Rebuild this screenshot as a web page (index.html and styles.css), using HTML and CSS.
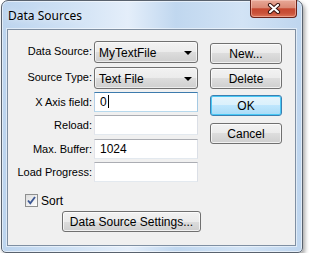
FILE: index.html
```html
<!DOCTYPE html>
<html>
<head>
    <title>Data Sources</title>
    <link rel="stylesheet" href="styles.css">
</head>
<body>
    <div class="window">
        <div class="titlebar">
            <span class="title">Data Sources</span>
            <div class="close">
                <svg width="14" height="11" viewBox="0 0 14 11">
                    <path d="M3 2 L11 9 M11 2 L3 9" stroke="#3a1410" stroke-width="4.2" stroke-linecap="round"/>
                    <path d="M3 2 L11 9 M11 2 L3 9" stroke="#ffffff" stroke-width="2.2" stroke-linecap="round"/>
                </svg>
            </div>
        </div>
        <div class="client">
            <div class="top">
                <div class="form">
                    <label class="lbl">Data Source:</label>
                    <div class="combo">MyTextFile<span class="arrow"></span></div>

                    <label class="lbl">Source Type:</label>
                    <div class="combo">Text File<span class="arrow"></span></div>

                    <label class="lbl">X Axis field:</label>
                    <div class="field focused">0<span class="caret"></span></div>

                    <label class="lbl">Reload:</label>
                    <div class="field"></div>

                    <label class="lbl">Max. Buffer:</label>
                    <div class="field">1024</div>

                    <label class="lbl">Load Progress:</label>
                    <div class="field"></div>
                </div>
                <div class="side">
                    <button class="btn btn-new">New...</button>
                    <button class="btn btn-delete">Delete</button>
                    <button class="btn btn-ok">OK</button>
                    <button class="btn btn-cancel">Cancel</button>
                </div>
            </div>
            <div class="check">
                <span class="box">
                    <svg width="11" height="11" viewBox="0 0 11 11">
                        <path d="M2 5.5 L4.3 8.3 L9 2" stroke="#3d5894" stroke-width="1.9" fill="none"/>
                    </svg>
                </span>
                Sort
            </div>
            <button class="btn btn-settings">Data Source Settings...</button>
        </div>
    </div>
</body>
</html>
```

FILE: styles.css
```css
body {
    margin: 0;
    background-color: #ffffff;
    font-family: "Liberation Sans", Arial, sans-serif;
    font-size: 11px;
    color: #000;
}

.window {
    margin-left: 1px;
    width: 300px;
    height: 251px;
    border: 1px solid #59626e;
    border-radius: 7px 7px 5px 5px;
    background: linear-gradient(90deg, #bcd4ee 0%, #cfe1f4 22%, #e4eefa 42%, #c0d7ef 58%, #d2e3f5 80%, #bed5ee 100%);
    box-shadow: inset 0 0 0 1px rgba(255, 255, 255, 0.55), 2px 3px 4px rgba(0, 0, 0, 0.35);
    display: flex;
    flex-direction: column;
}

.titlebar {
    height: 28px;
    display: flex;
    align-items: center;
    justify-content: space-between;
}

.title {
    padding-left: 6px;
    font-family: "Noto Sans", "Liberation Sans", sans-serif;
    font-size: 12px;
    color: #000;
    text-shadow: 0 0 6px rgba(255, 255, 255, 0.9);
}

.close {
    align-self: flex-start;
    margin-top: -1px;
    margin-right: 5px;
    width: 45px;
    height: 17px;
    border: 1px solid #6a2219;
    border-top: none;
    border-radius: 0 0 4px 4px;
    background: linear-gradient(#e8a897 0%, #db8a76 45%, #c6472f 52%, #c9533b 78%, #de7457 100%);
    box-shadow: inset 0 0 0 1px rgba(255, 220, 210, 0.45);
    display: flex;
    align-items: center;
    justify-content: center;
}

.client {
    flex: 1;
    margin: 0 6px 6px 5px;
    border: 1px solid #7f8fa2;
    background-color: #f0f0f0;
    box-shadow: 0 0 0 1px rgba(255, 255, 255, 0.5);
}

.top {
    display: flex;
    padding-top: 11px;
}

.form {
    display: grid;
    grid-template-columns: 84px 104px;
    grid-template-rows: 26px 25px 23px 24px 23px 20px;
    column-gap: 2px;
    align-items: start;
}

.lbl {
    text-align: right;
    line-height: 20px;
    white-space: nowrap;
}

.combo {
    position: relative;
    box-sizing: border-box;
    height: 22px;
    padding-left: 4px;
    line-height: 22px;
    font-size: 12px;
    border: 1px solid #707070;
    border-radius: 3px;
    background: linear-gradient(#f2f2f2 0%, #ebebeb 50%, #dddddd 50%, #cfcfcf 100%);
    box-shadow: inset 0 0 0 1px rgba(255, 255, 255, 0.6);
}

.arrow {
    position: absolute;
    right: 5px;
    top: 9px;
    width: 0;
    height: 0;
    border-left: 4px solid transparent;
    border-right: 4px solid transparent;
    border-top: 4px solid #000;
}

.field {
    box-sizing: border-box;
    height: 20px;
    padding-left: 5px;
    line-height: 18px;
    font-size: 12px;
    border: 1px solid;
    border-color: #abadb3 #dbdfe6 #e3e9ef #e2e3ea;
    background-color: #ffffff;
}

.field.focused {
    border-color: #3d7bad #a4c9e3 #b7d9ed #b5cfe7;
}

.caret {
    display: inline-block;
    width: 1px;
    height: 13px;
    margin-left: 1px;
    vertical-align: -2px;
    background-color: #000;
}

.side {
    display: flex;
    flex-direction: column;
    margin-left: 12px;
    padding-top: 2px;
}

.btn {
    box-sizing: border-box;
    width: 72px;
    height: 21px;
    padding: 0;
    font-family: "Liberation Sans", Arial, sans-serif;
    font-size: 12px;
    color: #000;
    border: 1px solid #707070;
    border-radius: 3px;
    background: linear-gradient(#f2f2f2 0%, #ebebeb 50%, #dddddd 50%, #cfcfcf 100%);
    box-shadow: inset 0 0 0 1px rgba(255, 255, 255, 0.7);
}

.btn-delete {
    margin-top: 4px;
}

.btn-ok {
    margin-top: 6px;
    border-color: #3c7fb1;
    background: linear-gradient(#e5f4fc 0%, #d9f0fc 50%, #bee6fd 50%, #a9dbf6 100%);
    box-shadow: inset 0 0 0 1px #48c8f5;
}

.btn-cancel {
    margin-top: 7px;
}

.check {
    display: flex;
    align-items: center;
    margin-top: 12px;
    padding-left: 17px;
    height: 13px;
    font-size: 12px;
}

.box {
    box-sizing: border-box;
    width: 13px;
    height: 13px;
    margin-right: 3px;
    border: 1px solid #8e8f8f;
    background: linear-gradient(135deg, #dcdcdc, #ffffff);
    display: flex;
    align-items: center;
    justify-content: center;
}

.btn-settings {
    display: block;
    margin-top: 4px;
    margin-left: 54px;
    width: 139px;
}
```
